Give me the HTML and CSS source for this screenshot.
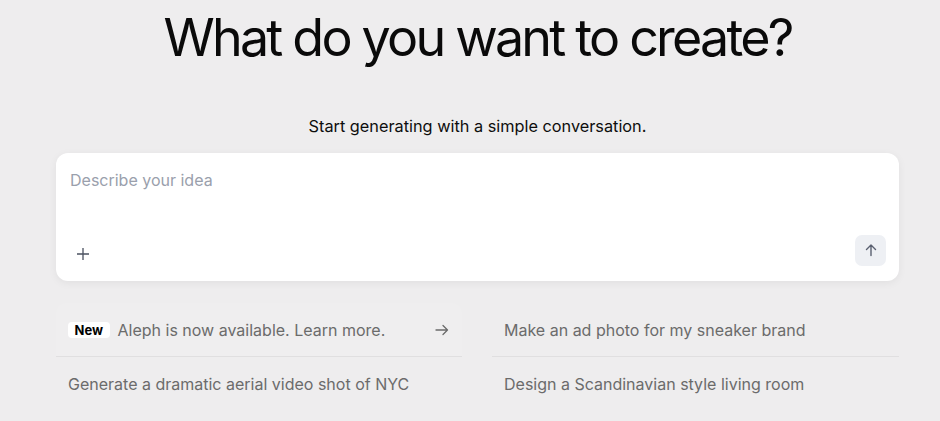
FILE: index.html
```html
<!DOCTYPE html>
<html>
<head>
<meta charset="utf-8">
<link rel="stylesheet" href="styles.css">
</head>
<body>
<main class="page">
  <h1 class="title">What do you want to create?</h1>
  <p class="subtitle">Start generating with a simple conversation.</p>
  <div class="composer">
    <div class="placeholder">Describe your idea</div>
    <div class="composer-bar">
      <button class="plus" aria-label="Add">
        <svg width="14" height="14" viewBox="0 0 14 14"><path d="M7 1v12M1 7h12" stroke="#4b5160" stroke-width="1.3" fill="none"/></svg>
      </button>
      <button class="send" aria-label="Send">
        <svg width="14" height="14" viewBox="0 0 14 14"><path d="M7 12.5V2M2.5 6.5L7 2l4.5 4.5" stroke="#5a6070" stroke-width="1.4" fill="none" stroke-linecap="round" stroke-linejoin="round"/></svg>
      </button>
    </div>
  </div>
  <div class="suggestions">
    <div class="col">
      <div class="item item-active">
        <span class="badge">New</span>
        <span class="item-text">Aleph is now available. Learn more.</span>
        <svg class="arrow" width="14" height="12" viewBox="0 0 14 12"><path d="M1 6h11.5M8 1.5L12.5 6 8 10.5" stroke="#6b6b6b" stroke-width="1.3" fill="none" stroke-linecap="round" stroke-linejoin="round"/></svg>
      </div>
      <div class="item"><span class="item-text">Generate a dramatic aerial video shot of NYC</span></div>
    </div>
    <div class="col">
      <div class="item"><span class="item-text">Make an ad photo for my sneaker brand</span></div>
      <div class="item"><span class="item-text">Design a Scandinavian style living room</span></div>
    </div>
  </div>
</main>
</body>
</html>
```
FILE: styles.css
```css
* { box-sizing: border-box; }
html, body { margin: 0; padding: 0; }
body {
  background: #eeedee;
  font-family: Inter, "Liberation Sans", sans-serif;
  color: #111;
  width: 940px;
  height: 421px;
  overflow: hidden;
}
.page {
  display: flex;
  flex-direction: column;
  align-items: center;
  padding: 0 41px 0 56px;
}
.title {
  margin: 8px 0 0 0;
  font-size: 52px;
  font-weight: 400;
  letter-spacing: -2.8px;
  line-height: 60px;
  color: #0a0a0a;
  white-space: nowrap;
}
.subtitle {
  margin: 48px 0 0 0;
  font-size: 16.3px;
  line-height: 20px;
  color: #0d0d0d;
}
.composer {
  margin-top: 17px;
  width: 843px;
  height: 128px;
  background: #fff;
  border-radius: 12px;
  box-shadow: 0 2px 8px rgba(0,0,0,0.06);
  padding: 17px 13px 13px 14px;
  display: flex;
  flex-direction: column;
  justify-content: space-between;
}
.placeholder {
  font-size: 16px;
  line-height: 20px;
  color: #9aa0ac;
}
.composer-bar {
  display: flex;
  justify-content: space-between;
  align-items: center;
}
button {
  border: 0;
  padding: 0;
  background: none;
  display: flex;
  align-items: center;
  justify-content: center;
}
.plus { width: 28px; height: 28px; margin-left: -1px; margin-top: 8px; }
.send {
  width: 31px;
  height: 31px;
  border-radius: 7px;
  background: #eef0f4;
}
.suggestions {
  margin-top: 22px;
  width: 843px;
  display: grid;
  grid-template-columns: 406px 407px;
  column-gap: 30px;
}
.col { display: flex; flex-direction: column; }
.item {
  height: 54px;
  display: flex;
  align-items: center;
  padding: 0 12px;
  font-size: 16px;
  color: #6b6b6b;
}
.item:first-child { border-bottom: 1px solid #e0dfe0; }
.item-active {
  background: #efeeef;
  border-radius: 10px 10px 0 0;
}
.badge {
  background: #fff;
  color: #000;
  font-weight: 700;
  font-size: 13px;
  line-height: 16px;
  padding: 0 6.5px;
  border-radius: 4px;
  margin-right: 8px;
}
.item-text { flex: 1; }
.arrow { margin-right: 1px; }
```
